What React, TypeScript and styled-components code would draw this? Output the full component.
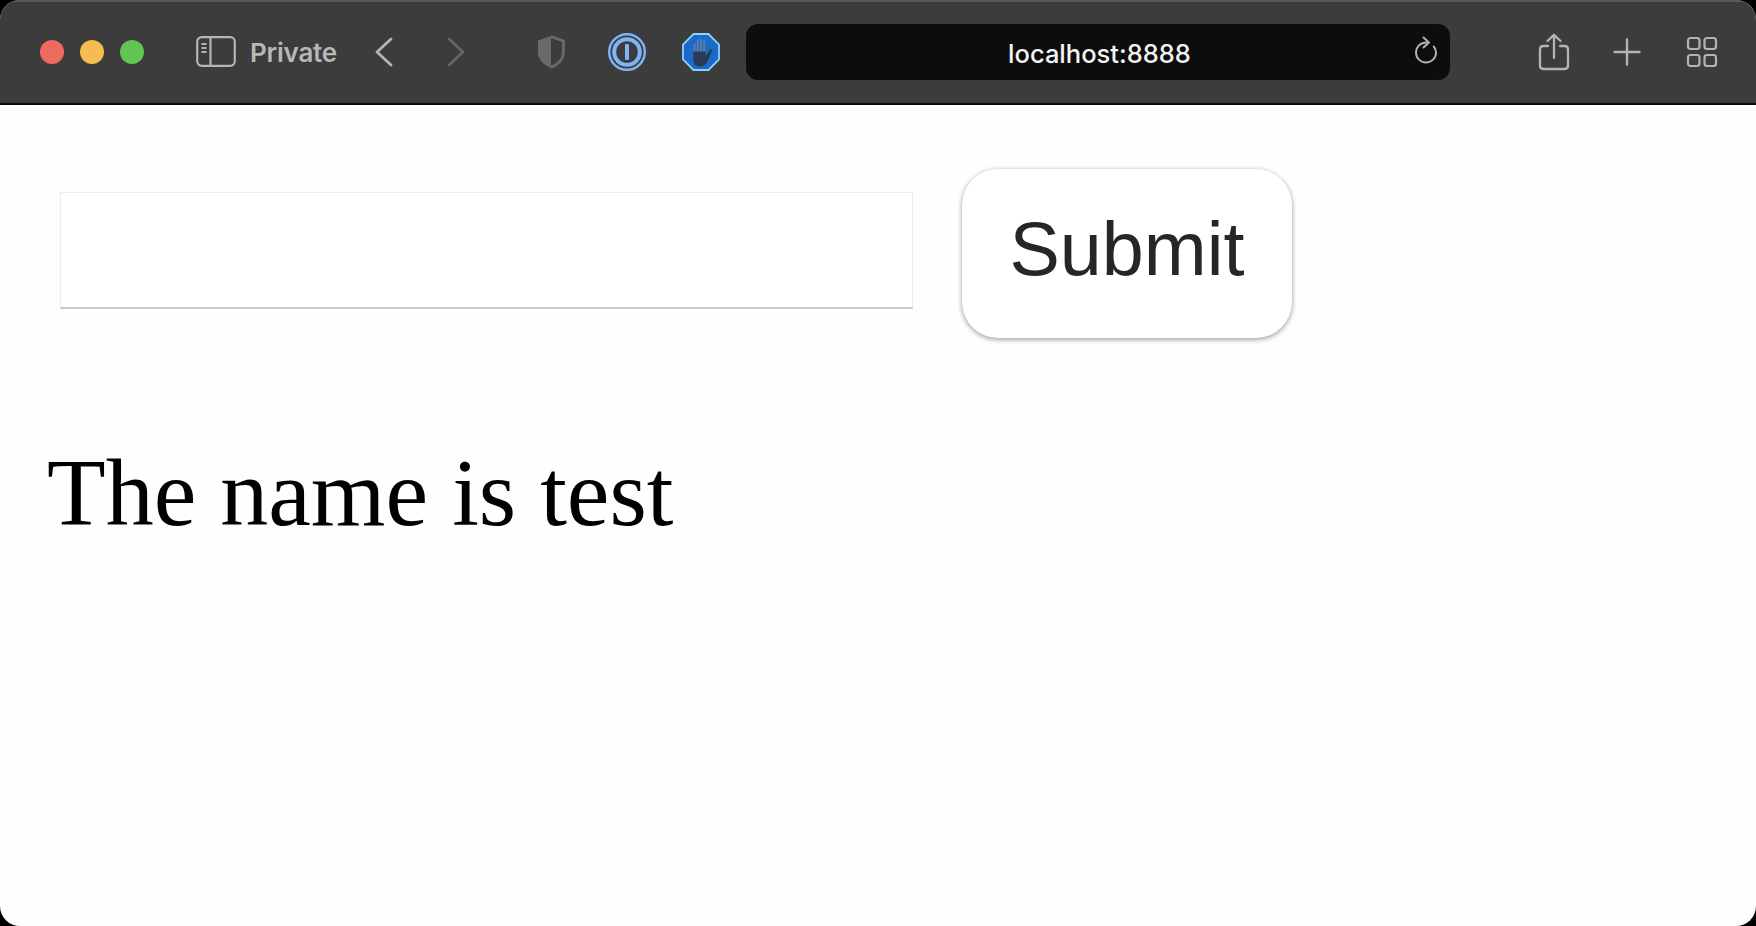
import styled, { createGlobalStyle } from "styled-components";

const GlobalStyle = createGlobalStyle`
  html, body {
    margin: 0;
    padding: 0;
    height: 100%;
    background: #000;
  }
`;

const Window = styled.div`
  display: flex;
  flex-direction: column;
  width: 1756px;
  height: 926px;
  border-radius: 20px;
  overflow: hidden;
  background: #fefefe;
`;

const Toolbar = styled.header`
  display: flex;
  align-items: center;
  height: 105px;
  box-sizing: border-box;
  padding: 0 39px 2px 40px;
  background: #3c3c3c;
  border-top: 2px solid #5a5a5a;
  border-bottom: 2px solid #0c0c0c;
`;

const Lights = styled.div`
  display: flex;
  gap: 16px;
`;

const Light = styled.span<{ $color: string }>`
  width: 24px;
  height: 24px;
  border-radius: 50%;
  background: ${(p) => p.$color};
`;

const IconSlot = styled.div<{ $left: number; $width: number }>`
  display: flex;
  align-items: center;
  justify-content: center;
  flex: none;
  width: ${(p) => p.$width}px;
  margin-left: ${(p) => p.$left}px;
  color: #b4b4b4;
  svg {
    display: block;
  }
`;

const PrivateLabel = styled.span`
  margin-left: 14px;
  padding-top: 3px;
  width: 88px;
  flex: none;
  font: 600 26px/1 Inter, "Liberation Sans", sans-serif;
  letter-spacing: -0.2px;
  color: #b7b7b7;
`;

const AddressBar = styled.div`
  display: flex;
  align-items: center;
  justify-content: center;
  position: relative;
  flex: none;
  width: 704px;
  height: 56px;
  margin-left: 26px;
  border-radius: 12px;
  background: #0d0d0d;
`;

const AddressText = styled.span`
  padding: 4px 0 0 3px;
  font: 500 25.5px/1 Inter, "Liberation Sans", sans-serif;
  color: #f4f4f4;
`;

const ReloadSlot = styled.div`
  position: absolute;
  right: 12px;
  top: 12px;
  color: #b4b4b4;
  svg {
    display: block;
  }
`;

const Content = styled.main`
  flex: 1;
  padding: 64px 0 0 47px;
`;

const NameForm = styled.form`
  display: flex;
  align-items: center;
  gap: 49px;
  padding-left: 13px;
`;

const NameInput = styled.input`
  width: 853px;
  height: 117px;
  margin-bottom: 7px;
  box-sizing: border-box;
  border: 1px solid #ececec;
  border-bottom: 2px solid #c9c9c9;
  background: #fff;
  outline: none;
`;

const SubmitButton = styled.button`
  width: 330px;
  height: 169px;
  padding: 0 0 8px;
  border: none;
  border-radius: 36px;
  background: #fff;
  color: #262626;
  font: 400 75.5px/1 "Liberation Sans", Arial, sans-serif;
  box-shadow: 0 2px 5px rgba(0, 0, 0, 0.3), 0 0 5px rgba(0, 0, 0, 0.12);
`;

const Result = styled.p`
  margin: 100px 0 0;
  font: 400 96px/1.15 "Liberation Serif", "Times New Roman", serif;
  color: #000;
`;

function App() {
  return (
    <>
      <GlobalStyle />
      <Window>
        <Toolbar>
          <Lights>
            <Light $color="#ee6a5f" />
            <Light $color="#f5bd4f" />
            <Light $color="#61c454" />
          </Lights>

          <IconSlot $left={52} $width={40}>
            <svg width="40" height="31" viewBox="0 0 40 31" fill="none" stroke="currentColor">
              <rect x="1.2" y="1.2" width="37.6" height="28.6" rx="4.5" strokeWidth="2.2" />
              <path d="M14.5 1.5v28" strokeWidth="2.2" />
              <path d="M5.5 8h5M5.5 12h5M5.5 16h5" strokeWidth="1.8" />
            </svg>
          </IconSlot>
          <PrivateLabel>Private</PrivateLabel>

          <IconSlot $left={34} $width={24}>
            <svg width="20" height="30" viewBox="0 0 20 30" fill="none" stroke="currentColor" strokeWidth="2.8" strokeLinecap="round" strokeLinejoin="round">
              <path d="M17 2L3 15l14 13" />
            </svg>
          </IconSlot>
          <IconSlot $left={48} $width={24}>
            <svg width="20" height="30" viewBox="0 0 20 30" fill="none" stroke="#666" strokeWidth="2.8" strokeLinecap="round" strokeLinejoin="round">
              <path d="M3 2l14 13L3 28" />
            </svg>
          </IconSlot>

          <IconSlot $left={67} $width={32}>
            <svg width="28" height="34" viewBox="0 0 28 34" fill="none">
              <path d="M14 1L27 5.5V17c0 8-6 13-13 16C7 30 1 25 1 17V5.5z" fill="#6a6a6a" />
              <path d="M14 3l11 3.9V17c0 6.8-5 11.2-11 13.8z" fill="#3c3c3c" />
              <path d="M14 1L27 5.5V17c0 8-6 13-13 16" stroke="#6a6a6a" strokeWidth="1.6" />
            </svg>
          </IconSlot>

          <IconSlot $left={41} $width={38}>
            <svg width="38" height="38" viewBox="0 0 38 38" fill="none">
              <circle cx="19" cy="19" r="17.8" stroke="#7db5f5" strokeWidth="2.4" />
              <circle cx="19" cy="19" r="12.8" stroke="#7db5f5" strokeWidth="4" />
              <rect x="17" y="11" width="4" height="16" rx="1" fill="#7db5f5" />
            </svg>
          </IconSlot>

          <IconSlot $left={36} $width={38}>
            <svg width="38" height="38" viewBox="0 0 38 38" fill="none">
              <path d="M11.5 1h15L37 11.5v15L26.500 37h-15L1 26.5v-15z" fill="#1b69c9" stroke="#8cd0fb" strokeWidth="1.8" />
              <path d="M12.600 20V11.500M15.800 20V7.500M19 20V6.500M22.200 20V8.500" stroke="#5a7ca6" strokeWidth="2.200" strokeLinecap="round" />
              <path
                d="M11.400 18.500H23.400V23L28 16.800c1-1.300 2.900-.2 2.200 1.300L25.200 28.800C24 31.500 22 33.500 19 33.500h-1.800c-3.300 0-5.800-2.300-5.800-6z"
                fill="#2a3a55"
              />
            </svg>
          </IconSlot>

          <AddressBar>
            <AddressText>localhost:8888</AddressText>
            <ReloadSlot>
              <svg width="24" height="30" viewBox="0 0 24 30" fill="none" stroke="currentColor" strokeWidth="1.9" strokeLinecap="round" strokeLinejoin="round">
                <path d="M12.500 6.500C6.500 6.500 2 10.800 2 16.500S6.500 26.500 12 26.500 22 22.200 22 16.800c0-2.500-.9-4.700-2.300-6.300" />
                <path d="M9.500 1.500l5.500 5-5.500 5" />
              </svg>
            </ReloadSlot>
          </AddressBar>

          <IconSlot $left={88} $width={32}>
            <svg width="32" height="38" viewBox="0 0 32 38" fill="none" stroke="currentColor" strokeWidth="2.300" strokeLinecap="round" strokeLinejoin="round">
              <path d="M10 13H5.500C3 13 2 14.200 2 16.500v16C2 35 3 36 5.500 36h21c2.500 0 3.500-1 3.500-3.500v-16c0-2.300-1-3.500-3.500-3.500H22" />
              <path d="M16 25V2M9.500 8L16 1.800 22.500 8" />
            </svg>
          </IconSlot>
          <IconSlot $left={43} $width={28}>
            <svg width="28" height="28" viewBox="0 0 28 28" fill="none" stroke="currentColor" strokeWidth="2.400" strokeLinecap="round">
              <path d="M14 1.500v25M1.500 14h25" />
            </svg>
          </IconSlot>
          <IconSlot $left={45} $width={32}>
            <svg width="32" height="32" viewBox="0 0 32 32" fill="none" stroke="currentColor" strokeWidth="2.200">
              <rect x="2" y="2" width="11.500" height="11" rx="2.500" />
              <rect x="18.500" y="2" width="11.500" height="11" rx="2.500" />
              <rect x="2" y="19" width="11.500" height="11" rx="2.500" />
              <rect x="18.500" y="19" width="11.500" height="11" rx="2.500" />
            </svg>
          </IconSlot>
        </Toolbar>

        <Content>
          <NameForm onSubmit={(e) => e.preventDefault()}>
            <NameInput type="text" />
            <SubmitButton type="submit">Submit</SubmitButton>
          </NameForm>
          <Result>The name is test</Result>
        </Content>
      </Window>
    </>
  );
}

export default App;
